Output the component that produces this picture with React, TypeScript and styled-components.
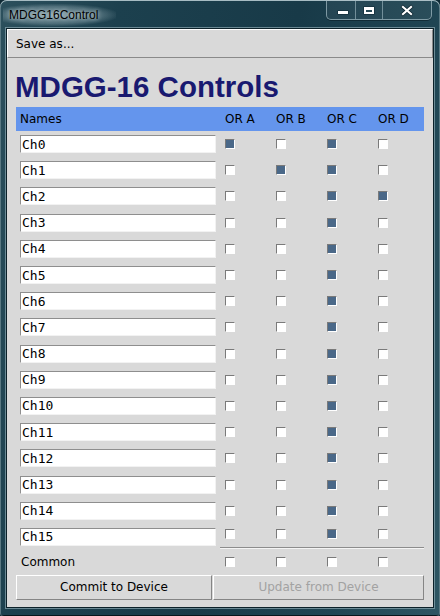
import React from 'react';
import styled, { createGlobalStyle } from 'styled-components';

// Layout constants taken from the dialog
const COLS = '204px repeat(4, 51px)';
const ROW_H = '26.2px';

const GlobalStyle = createGlobalStyle`
  html, body {
    margin: 0;
    padding: 0;
    background: #102a35;
  }
  body {
    font-family: 'DejaVu Sans', 'Noto Sans', sans-serif;
  }
  * {
    box-sizing: border-box;
  }
`;

// Window chrome
const Frame = styled.div`
  width: 440px;
  height: 616px;
  display: flex;
  flex-direction: column;
  padding: 0 7px 9px;
  border-radius: 7px 7px 3px 3px;
  background:
    linear-gradient(100deg, #2c505d 0%, #1c404e 22%, #183a48 55%, #1f4553 80%, #2e5663 100%);
  box-shadow:
    inset 0 1px 0 #a7bcc3,
    inset 1px 0 0 #5a7983,
    inset -1px 0 0 #5a7983,
    inset 0 -1px 0 #07161c;
`;

const TitleBar = styled.div`
  height: 29px;
  flex: none;
  display: flex;
  align-items: flex-start;
  justify-content: space-between;
  margin: 0 -2px 0 0;
`;

const Caption = styled.div`
  margin: 4px 0 0 -4px;
  padding: 4px 18px 4px 6px;
  font-family: 'Liberation Sans', Arial, sans-serif;
  font-size: 12px;
  line-height: 14px;
  color: #000;
  background: radial-gradient(ellipse at 45% 50%, rgba(200, 218, 223, 0.55) 0%, rgba(200, 218, 223, 0.25) 55%, transparent 75%);
  text-shadow: 0 0 4px rgba(235, 245, 248, 0.9);
`;

const CaptionButtons = styled.div`
  display: flex;
  height: 20px;
  margin-right: 3px;
  border: 1px solid rgba(165, 190, 198, 0.7);
  border-top: none;
  border-radius: 0 0 5px 5px;
  overflow: hidden;
  background: rgba(255, 255, 255, 0.05);
  box-shadow: 0 1px 0 rgba(10, 30, 38, 0.6);
`;

const CaptionButton = styled.div<{ $width: number }>`
  width: ${p => p.$width}px;
  height: 19px;
  & + & {
    border-left: 1px solid rgba(165, 190, 198, 0.6);
  }
  svg {
    display: block;
  }
`;

const Client = styled.div`
  flex: 1;
  display: flex;
  flex-direction: column;
  background: #d9d9d9;
  box-shadow: 0 0 0 1px #0c2129, 0 0 0 2px rgba(140, 168, 178, 0.7);
`;

const MenuBar = styled.div`
  height: 29px;
  flex: none;
  display: flex;
  align-items: center;
  padding-left: 8px;
  border-top: 1px solid #fff;
  border-left: 1px solid #fff;
  border-bottom: 1px solid #8a8a8a;
  border-right: 1px solid #8a8a8a;
  font-size: 12px;
  color: #000;
`;

const Content = styled.div`
  flex: 1;
  display: flex;
  flex-direction: column;
  padding: 0 9px 7px;
`;

const Heading = styled.h1`
  margin: 12px 0 3px -1px;
  font-family: 'Liberation Sans', Arial, sans-serif;
  font-weight: bold;
  font-size: 29.5px;
  line-height: 34px;
  color: #191970;
`;

// Table
const HeaderRow = styled.div`
  display: grid;
  grid-template-columns: ${COLS};
  align-items: center;
  height: 24px;
  background: #6495ed;
  font-size: 12px;
  color: #000;
`;

const HeaderCell = styled.div<{ $first?: boolean }>`
  padding-left: ${p => (p.$first ? 4 : 5)}px;
`;

const Row = styled.div<{ $height?: string }>`
  display: grid;
  grid-template-columns: ${COLS};
  align-items: center;
  height: ${p => p.$height || ROW_H};
`;

const NameInput = styled.input`
  width: 196px;
  height: 18px;
  margin: 0 0 0 4px;
  padding: 0 0 0 1px;
  border-style: solid;
  border-width: 1px;
  border-color: #8e8e8e #f2f2f2 #f2f2f2 #8e8e8e;
  background: #fff;
  font-family: 'DejaVu Sans Mono', 'Liberation Mono', monospace;
  font-size: 13px;
  color: #000;
  outline: none;
`;

const CheckCell = styled.div<{ $divider?: boolean }>`
  display: flex;
  padding-left: 5px;
  align-items: ${p => (p.$divider ? 'flex-start' : 'center')};
  ${p =>
    p.$divider &&
    `
    align-self: start;
    height: 24px;
    padding-top: 5px;
    border-bottom: 1px solid #8c8c8c;
    box-shadow: 0 1px 0 #f4f4f4;
  `}
`;

const Box = styled.span<{ $checked?: boolean }>`
  display: block;
  width: 10px;
  height: 10px;
  border-style: solid;
  border-width: 1px;
  border-color: #7a7a7a #fff #fff #7a7a7a;
  background: ${p => (p.$checked ? '#4a6888' : '#fff')};
`;

const Label = styled.div`
  padding-left: 5px;
  font-size: 12px;
  color: #000;
`;

const ButtonRow = styled.div`
  display: grid;
  grid-template-columns: 196px 1fr;
  column-gap: 1px;
  height: 25px;
`;

const PushButton = styled.button`
  height: 25px;
  margin: 0;
  padding: 0;
  background: #d9d9d9;
  border-style: solid;
  border-width: 1px;
  border-color: #fff #858585 #858585 #fff;
  font-family: 'DejaVu Sans', sans-serif;
  font-size: 12px;
  color: #000;
  &:disabled {
    color: #a2a2a2;
  }
`;

const channels = Array.from({ length: 16 }, (_, i) => `Ch${i}`);

// Which OR outputs are enabled for each channel (A, B, C, D)
const routing: boolean[][] = channels.map((_, i) => {
  if (i === 0) return [true, false, true, false];
  if (i === 1) return [false, true, true, false];
  if (i === 2) return [false, false, true, true];
  return [false, false, true, false];
});

const MinIcon = () => (
  <svg width="28" height="19" viewBox="0 0 28 19">
    <rect x="10.5" y="10.5" width="11" height="4" fill="#0d2530" />
    <rect x="11" y="11" width="10" height="3" fill="#fff" />
  </svg>
);

const MaxIcon = () => (
  <svg width="26" height="19" viewBox="0 0 26 19">
    <rect x="7.5" y="6.5" width="11" height="8" fill="#0d2530" />
    <rect x="8" y="7" width="10" height="7" fill="#fff" />
    <rect x="10" y="10" width="6" height="2" fill="#284a57" />
  </svg>
);

const CloseIcon = () => (
  <svg width="48" height="19" viewBox="0 0 48 19">
    <path d="M20 7 L28 14 M28 7 L20 14" stroke="#0d2530" strokeWidth="3.6" strokeLinecap="square" />
    <path d="M20 7 L28 14 M28 7 L20 14" stroke="#fff" strokeWidth="2.2" strokeLinecap="square" />
  </svg>
);

export default function App() {
  return (
    <>
      <GlobalStyle />
      <Frame>
        <TitleBar>
          <Caption>MDGG16Control</Caption>
          <CaptionButtons>
            <CaptionButton $width={28}>
              <MinIcon />
            </CaptionButton>
            <CaptionButton $width={27}>
              <MaxIcon />
            </CaptionButton>
            <CaptionButton $width={49}>
              <CloseIcon />
            </CaptionButton>
          </CaptionButtons>
        </TitleBar>
        <Client>
          <MenuBar>Save as...</MenuBar>
          <Content>
            <Heading>MDGG-16 Controls</Heading>
            <HeaderRow>
              <HeaderCell $first>Names</HeaderCell>
              <HeaderCell>OR A</HeaderCell>
              <HeaderCell>OR B</HeaderCell>
              <HeaderCell>OR C</HeaderCell>
              <HeaderCell>OR D</HeaderCell>
            </HeaderRow>
            {channels.map((name, i) => (
              <Row key={name}>
                <NameInput defaultValue={name} />
                {routing[i].map((on, j) => (
                  <CheckCell key={j} $divider={i === channels.length - 1}>
                    <Box $checked={on} />
                  </CheckCell>
                ))}
              </Row>
            ))}
            <Row $height="24.8px">
              <Label>Common</Label>
              {[0, 1, 2, 3].map(j => (
                <CheckCell key={j}>
                  <Box />
                </CheckCell>
              ))}
            </Row>
            <ButtonRow>
              <PushButton>Commit to Device</PushButton>
              <PushButton disabled>Update from Device</PushButton>
            </ButtonRow>
          </Content>
        </Client>
      </Frame>
    </>
  );
}
